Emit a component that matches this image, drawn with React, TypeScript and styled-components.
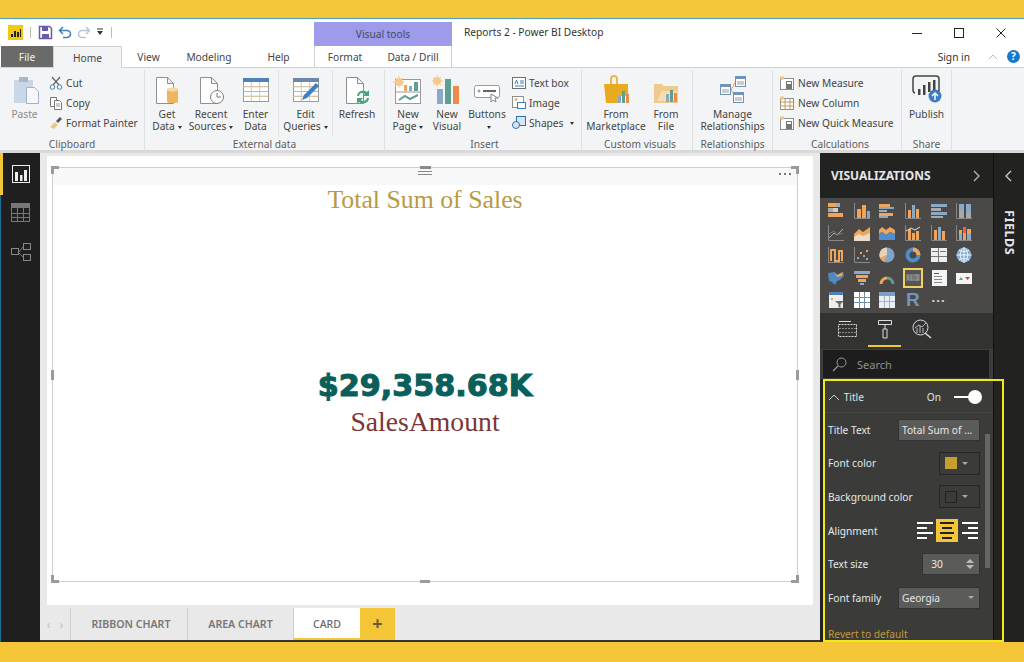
import React from "react";
import styled, { createGlobalStyle } from "styled-components";

const UI = `"Noto Sans", "Open Sans", "Liberation Sans", sans-serif`;
const SERIF = `"Liberation Serif", "DejaVu Serif", serif`;
const YELLOW = "#f4c536";
const OR = "#f0a55a";
const BL = "#8aa8c8";
const GR = "#5f9f8f";
const GY = "#a9a9a9";

const Global = createGlobalStyle`
  html, body { margin: 0; padding: 0; background: ${YELLOW}; }
  * { box-sizing: border-box; }
`;

const Page = styled.div`
  width: 1024px;
  height: 662px;
  display: flex;
  flex-direction: column;
  overflow: hidden;
  background: ${YELLOW};
  font-family: ${UI};
  font-size: 10.2px;
  color: #444;
`;
const Band = styled.div<{ $h: number }>`
  height: ${(p) => p.$h}px;
  flex: none;
  background: ${YELLOW};
`;
const Win = styled.div`
  flex: 1;
  min-height: 0;
  display: flex;
  flex-direction: column;
  background: #fff;
  border-top: 1px solid #4fa3bd;
`;

/* title bar */
const TitleBar = styled.div`
  height: 27px;
  flex: none;
  display: flex;
  background: #fff;
`;
const Quick = styled.div`
  width: 314px;
  display: flex;
  align-items: center;
  gap: 5px;
  padding: 0 0 0 8px;
  height: 26px;
`;
const QuickSep = styled.span`
  width: 1px;
  height: 11px;
  background: #bbb;
  margin: 0 2px;
`;
const ContextHead = styled.div`
  width: 138px;
  margin-top: 3px;
  background: #9d9bea;
  color: #3e4a63;
  text-align: center;
  line-height: 25px;
`;
const DocTitle = styled.div`
  flex: 1;
  padding: 6px 0 0 12px;
  color: #333;
`;
const WinButtons = styled.div`
  display: flex;
  padding: 2px 2px 0 0;
`;
const WinBtn = styled.div`
  width: 42px;
  height: 24px;
  display: flex;
  align-items: center;
  justify-content: center;
`;

/* tab row */
const TabRow = styled.div`
  height: 22px;
  flex: none;
  display: flex;
  align-items: stretch;
  background: #fff;
  border-bottom: 1px solid #d2d2d2;
`;
const FileTab = styled.div`
  width: 52px;
  margin-left: 1px;
  background: #6a6a6a;
  color: #f4f4f4;
  text-align: center;
  line-height: 23px;
`;
const RibbonTab = styled.div<{ $w: number; $active?: boolean }>`
  width: ${(p) => p.$w}px;
  text-align: center;
  line-height: 23px;
  background: ${(p) => (p.$active ? "#f3f4f5" : "#fff")};
  border-left: ${(p) => (p.$active ? "1px solid #d2d2d2" : "none")};
  border-right: ${(p) => (p.$active ? "1px solid #d2d2d2" : "none")};
  border-top: ${(p) => (p.$active ? "1px solid #d2d2d2" : "none")};
  margin-bottom: ${(p) => (p.$active ? "-1px" : "0")};
  color: #444;
`;
const ContextTabs = styled.div`
  width: 138px;
  display: flex;
  border-right: 1px solid #d2d2d2;
  border-left: 1px solid #d2d2d2;
`;
const SignIn = styled.div`
  margin-left: auto;
  display: flex;
  align-items: center;
  gap: 9px;
  padding-right: 4px;
  color: #333;
`;
const SignInText = styled.span`
  margin-right: 9px;
`;
const HelpDot = styled.div`
  width: 13px;
  height: 13px;
  border-radius: 50%;
  background: #1579cc;
  color: #fff;
  font-size: 10px;
  font-weight: 700;
  line-height: 13px;
  text-align: center;
`;

/* ribbon */
const Ribbon = styled.div`
  height: 85px;
  flex: none;
  display: flex;
  background: #f3f4f5;
  border-bottom: 3px solid #d9d9d9;
`;
const Group = styled.div<{ $w: number; $pad?: number }>`
  width: ${(p) => p.$w}px;
  flex: none;
  display: flex;
  flex-direction: column;
  border-right: 1px solid #dedfe0;
  margin: 2px 0 0;
  padding-left: ${(p) => p.$pad ?? 0}px;
`;
const GroupBody = styled.div`
  height: 67px;
  flex: none;
  display: flex;
`;
const GroupLabel = styled.div`
  text-align: center;
  color: #5c5c5c;
  line-height: 14px;
  height: 13px;
`;
const Large = styled.div<{ $w: number; $muted?: boolean; $line?: boolean }>`
  width: ${(p) => p.$w}px;
  flex: none;
  display: flex;
  flex-direction: column;
  align-items: center;
  text-align: center;
  line-height: 12px;
  padding-top: 4px;
  color: ${(p) => (p.$muted ? "#8b8b8b" : "#444")};
  border-right: ${(p) => (p.$line ? "1px solid #e2e3e4" : "none")};
  white-space: nowrap;
`;
const LargeIcon = styled.div`
  height: 32px;
  margin-bottom: 2px;
  display: flex;
  align-items: center;
  justify-content: center;
`;
const Caret = styled.span`
  display: inline-block;
  margin-left: 3px;
  width: 0;
  height: 0;
  border-left: 2.5px solid transparent;
  border-right: 2.5px solid transparent;
  border-top: 3px solid #333;
  vertical-align: middle;
`;
const SmallCol = styled.div<{ $ml?: number }>`
  display: flex;
  flex-direction: column;
  padding-top: 6px;
  margin-left: ${(p) => p.$ml ?? 0}px;
  gap: 6px;
`;
const Small = styled.div`
  height: 14px;
  display: flex;
  align-items: center;
  gap: 3px;
  white-space: nowrap;
  line-height: 14px;
`;

/* main */
const Main = styled.div`
  flex: 1;
  min-height: 0;
  display: flex;
`;
const Nav = styled.div`
  width: 40px;
  flex: none;
  background: #1f1f1f;
  border-left: 1px solid #1d6f94;
  display: flex;
  flex-direction: column;
  align-items: center;
  padding-top: 12px;
  gap: 20px;
  position: relative;
`;
const NavMark = styled.div`
  position: absolute;
  left: -1px;
  top: 0;
  width: 3px;
  height: 42px;
  background: ${YELLOW};
`;
const Center = styled.div`
  width: 780px;
  flex: none;
  display: flex;
  flex-direction: column;
  background: #e9e9e9;
`;
const CanvasWrap = styled.div`
  flex: 1;
  min-height: 0;
  padding: 3px 7px 3px 7px;
`;
const Canvas = styled.div`
  height: 100%;
  background: #fff;
  padding: 11px 15px 23px 5px;
`;
const Visual = styled.div`
  position: relative;
  height: 100%;
  border: 1px solid #cfcfcf;
  display: flex;
  flex-direction: column;
  align-items: center;
`;
const VisualHead = styled.div`
  align-self: stretch;
  height: 17px;
  flex: none;
  background: #f7f8fa;
`;
const ChartTitle = styled.div`
  font-family: ${SERIF};
  font-size: 25.8px;
  line-height: 30px;
  color: #b89a45;
`;
const CardBody = styled.div`
  flex: 1;
  display: flex;
  flex-direction: column;
  align-items: center;
  padding-top: 151px;
`;
const CardValue = styled.div`
  font-family: "DejaVu Sans", "Liberation Sans", sans-serif;
  font-weight: 700;
  font-size: 30.2px;
  line-height: 40px;
  color: #0b5f5b;
  -webkit-text-stroke: 1.1px #0b5f5b;
`;
const CardLabel = styled.div`
  font-family: ${SERIF};
  font-size: 27.7px;
  line-height: 32px;
  color: #7d3535;
`;
const Corner = styled.div<{ $x: "left" | "right"; $y: "top" | "bottom" }>`
  position: absolute;
  width: 8px;
  height: 8px;
  ${(p) => p.$x}: -2px;
  ${(p) => p.$y}: -2px;
  border-${(p) => p.$x}: 3px solid #9b9b9b;
  border-${(p) => p.$y}: 3px solid #9b9b9b;
`;
const Handle = styled.div<{ $side: "left" | "right" | "bottom" }>`
  position: absolute;
  background: #9b9b9b;
  ${(p) =>
    p.$side === "bottom"
      ? "bottom: -2px; left: 50%; margin-left: -5px; width: 10px; height: 3px;"
      : `${p.$side}: -2px; top: 50%; margin-top: -5px; width: 3px; height: 10px;`}
`;
const Grip = styled.div`
  position: absolute;
  top: -2px;
  left: 50%;
  margin-left: -7px;
  width: 14px;
  display: flex;
  flex-direction: column;
  align-items: center;
  gap: 2px;
  & > i {
    display: block;
    height: 1px;
    width: 14px;
    background: #8a8a8a;
  }
  & > i:first-child {
    height: 3px;
    width: 11px;
  }
`;
const More = styled.div`
  position: absolute;
  top: 5px;
  right: 6px;
  display: flex;
  gap: 3px;
  & > i {
    width: 2px;
    height: 2px;
    background: #777;
  }
`;

/* page tabs */
const PageTabs = styled.div`
  height: 34px;
  flex: none;
  display: flex;
  background: #e9e9e9;
  border-bottom: 2px solid #333;
`;
const TabArrows = styled.div`
  width: 31px;
  display: flex;
  align-items: center;
  justify-content: center;
  gap: 9px;
  color: #bfbfbf;
  font-size: 12px;
  border-right: 1px solid #cfcfcf;
`;
const PageTab = styled.div<{ $w: number; $active?: boolean; $shift?: number }>`
  width: ${(p) => p.$w}px;
  text-align: center;
  line-height: 32px;
  padding-left: ${(p) => p.$shift ?? 0}px;
  font-size: 10.6px;
  font-weight: ${(p) => (p.$active ? 500 : 600)};
  color: ${(p) => (p.$active ? "#6a6a6a" : "#777")};
  background: ${(p) => (p.$active ? "#fff" : "transparent")};
  border-right: ${(p) => (p.$active ? "none" : "1px solid #cfcfcf")};
  border-bottom: ${(p) => (p.$active ? `2px solid ${YELLOW}` : "none")};
`;
const AddTab = styled.div`
  width: 35px;
  background: ${YELLOW};
  color: #6a5a30;
  font-size: 18px;
  font-weight: 700;
  line-height: 30px;
  text-align: center;
`;

/* visualizations */
const VizPane = styled.div`
  width: 173px;
  flex: none;
  background: #222221;
  display: flex;
  flex-direction: column;
`;
const VizHead = styled.div`
  height: 45px;
  flex: none;
  display: flex;
  align-items: center;
  justify-content: space-between;
  padding: 0 11px 0 11px;
  color: #e4e7ea;
  font-size: 12px;
  font-weight: 700;
`;
const VizGrid = styled.div`
  height: 115px;
  flex: none;
  background: #4a4947;
  padding: 2px 0 0 3px;
  display: grid;
  grid-template-columns: repeat(6, 25.7px);
  grid-auto-rows: 22.2px;
  justify-items: center;
  align-items: center;
`;
const VizCell = styled.div<{ $on?: boolean }>`
  width: 20px;
  height: 20px;
  display: flex;
  align-items: center;
  justify-content: center;
  border: 2px solid ${(p) => (p.$on ? "#f0d264" : "transparent")};
`;
const RGlyph = styled.span`
  color: #6f97bd;
  font-family: "Liberation Sans", sans-serif;
  font-size: 19px;
  font-weight: 700;
  line-height: 20px;
`;
const DotsGlyph = styled.span`
  color: #ddd;
  font-size: 13px;
  font-weight: 700;
  letter-spacing: 1px;
  line-height: 10px;
  padding-bottom: 6px;
`;
const PaneTabs = styled.div`
  height: 36px;
  flex: none;
  background: #333332;
  display: flex;
  padding-left: 11px;
`;
const PaneTab = styled.div<{ $on?: boolean }>`
  width: 33px;
  height: 34px;
  margin-right: 4px;
  display: flex;
  align-items: center;
  justify-content: center;
  border-bottom: 2px solid ${(p) => (p.$on ? YELLOW : "transparent")};
`;
const SearchWrap = styled.div`
  height: 30px;
  flex: none;
  background: #3d3d3c;
  padding: 1px 4px 0 3px;
`;
const SearchBox = styled.div`
  height: 28px;
  background: #1d1d1d;
  display: flex;
  align-items: center;
  gap: 10px;
  padding-left: 9px;
  color: #8f8f8f;
  font-size: 11px;
`;
const Format = styled.div`
  flex: 1;
  min-height: 0;
  margin-left: 3px;
  background: #3b3b3a;
  position: relative;
  overflow: hidden;
`;
const FormatHead = styled.div`
  height: 34px;
  display: flex;
  align-items: center;
  padding: 3px 11px 0 5px;
  color: #dde3e6;
  border-bottom: 1px solid #454544;
`;
const ToggleLabel = styled.span`
  margin-left: auto;
  margin-right: 13px;
`;
const Toggle = styled.div`
  width: 28px;
  height: 14px;
  position: relative;
  &::before {
    content: "";
    position: absolute;
    left: 0;
    top: 6px;
    width: 20px;
    height: 2px;
    background: #fff;
  }
  &::after {
    content: "";
    position: absolute;
    right: 0;
    top: 0;
    width: 14px;
    height: 14px;
    border-radius: 50%;
    background: #fff;
  }
`;
const Row = styled.div`
  height: 33.6px;
  display: flex;
  align-items: center;
  justify-content: space-between;
  padding: 0 13px 0 5px;
  color: #e6e9ea;
  white-space: nowrap;
`;
const Field = styled.div<{ $w: number }>`
  width: ${(p) => p.$w}px;
  height: 22px;
  background: #5b5b5a;
  border: 1px solid #333;
  color: #e8e8e8;
  display: flex;
  align-items: center;
  justify-content: space-between;
  padding: 0 5px 0 3px;
`;
const Swatch = styled.div`
  width: 41px;
  height: 23px;
  border: 1px solid #262626;
  display: flex;
  align-items: center;
  gap: 5px;
  padding-left: 5px;
`;
const SwatchFill = styled.div<{ $c: string; $line?: boolean }>`
  width: 12px;
  height: 12px;
  background: ${(p) => p.$c};
  border: ${(p) => (p.$line ? "1px solid #222" : "none")};
`;
const TinyCaret = styled.span`
  width: 0;
  height: 0;
  border-left: 3px solid transparent;
  border-right: 3px solid transparent;
  border-top: 3px solid #aaa;
`;
const AlignGroup = styled.div`
  display: flex;
  align-items: center;
  gap: 3px;
  margin-right: 2px;
`;
const AlignBtn = styled.div<{ $on?: boolean }>`
  width: ${(p) => (p.$on ? 22 : 16)}px;
  height: 23px;
  margin-right: ${(p) => (p.$on ? 1 : 0)}px;
  background: ${(p) => (p.$on ? YELLOW : "transparent")};
  display: flex;
  flex-direction: column;
  justify-content: center;
  gap: 3px;
  padding: 0 ${(p) => (p.$on ? 4 : 0)}px;
`;
const AlignLine = styled.i<{ $on?: boolean; $w: number; $end?: boolean }>`
  display: block;
  height: 2px;
  width: ${(p) => p.$w}px;
  background: ${(p) => (p.$on ? "#222" : "#fff")};
  align-self: ${(p) => (p.$end ? "flex-end" : p.$on ? "center" : "flex-start")};
`;
const Spin = styled.div`
  display: flex;
  flex-direction: column;
  gap: 2px;
  & > i {
    width: 0;
    height: 0;
    border-left: 4px solid transparent;
    border-right: 4px solid transparent;
  }
  & > i:first-child {
    border-bottom: 4px solid #bbb;
  }
  & > i:last-child {
    border-top: 4px solid #bbb;
  }
`;
const Revert = styled.div`
  padding: 12px 0 0 5px;
  color: #c09a3a;
`;
const ScrollThumb = styled.div`
  position: absolute;
  top: 55px;
  right: 3px;
  width: 5px;
  height: 134px;
  background: #666;
`;
const Highlight = styled.div`
  position: absolute;
  left: 823px;
  top: 379px;
  width: 181px;
  height: 263px;
  border: 2px solid #f2ea12;
  pointer-events: none;
`;
const FieldsPane = styled.div`
  width: 31px;
  flex: none;
  background: #222221;
  border-left: 1px solid #111;
  display: flex;
  flex-direction: column;
  align-items: center;
  padding-top: 17px;
`;
const FieldsLabel = styled.div`
  writing-mode: vertical-rl;
  margin-top: 28px;
  color: #e4e7ea;
  font-size: 12.5px;
  font-weight: 700;
  line-height: 14px;
  letter-spacing: 0.6px;
`;

/* ---- ribbon icons ---- */
const Svg = ({ s = 28, h, children }: { s?: number; h?: number; children: React.ReactNode }) => (
  <svg width={s} height={h ?? s} viewBox={`0 0 ${s} ${h ?? s}`} style={{ display: "block" }}>
    {children}
  </svg>
);
const Doc = () => (
  <path d="M4.500 2.500h11l6 6v20h-17z M15.500 2.500v6h6" fill="#fff" stroke="#8f8f8f" />
);
const TableGrid = ({ x, y, w, h, head = "#4f81bd" }: { x: number; y: number; w: number; h: number; head?: string }) => (
  <g>
    <rect x={x + 0.5} y={y + 0.5} width={w} height={h} fill="#fff" stroke="#9a9a9a" />
    <rect x={x} y={y} width={w + 1} height={4} fill={head} />
    {[1, 2, 3].map((i) => (
      <path key={i} d={`M${x} ${y + 4 + (i * (h - 4)) / 4}h${w}`} stroke="#c9b48c" />
    ))}
    {[1, 2].map((i) => (
      <path key={i} d={`M${x + (i * w) / 3} ${y + 4}v${h - 4}`} stroke="#c9c9c9" />
    ))}
  </g>
);

const PasteIcon = () => (
  <Svg s={30}>
    <rect x="4" y="5" width="19" height="23" fill="#c9d7e6" />
    <rect x="9" y="2" width="9" height="5" fill="#a9b8c8" />
    <path d="M16.500 12.500h8l4 4v12h-12z" fill="#f6f8fb" stroke="#9fb4cc" />
  </Svg>
);
const CutIcon = () => (
  <Svg s={14}>
    <path d="M3 1l7 8M11 1L4 9" stroke="#666" strokeWidth="1.200" fill="none" />
    <circle cx="3.500" cy="11" r="2.300" fill="none" stroke="#4f81bd" />
    <circle cx="10.500" cy="11" r="2.300" fill="none" stroke="#4f81bd" />
  </Svg>
);
const CopyIcon = () => (
  <Svg s={14}>
    <path d="M1.500 1.500h6v9h-6z" fill="#fff" stroke="#777" />
    <path d="M5.500 4.500h5l2 2v7h-7z" fill="#fff" stroke="#777" />
    <path d="M7 8h4M7 10h4" stroke="#999" />
  </Svg>
);
const PainterIcon = () => (
  <Svg s={14}>
    <path d="M1 11l5-5 3 3-4 4z" fill="#e8c98a" />
    <path d="M7 5l4-4 2 2-4 4z" fill="#555" />
  </Svg>
);
const GetDataIcon = () => (
  <Svg s={30}>
    <Doc />
    <rect x="15" y="14" width="11" height="14" rx="2" fill="#f0b45e" />
    <ellipse cx="20.500" cy="14.500" rx="5.500" ry="2" fill="#f8d8a0" />
  </Svg>
);
const RecentIcon = () => (
  <Svg s={30}>
    <Doc />
    <circle cx="21" cy="22" r="6.500" fill="#fff" stroke="#7a7a7a" />
    <path d="M21 18v4h4" fill="none" stroke="#7a7a7a" />
  </Svg>
);
const EnterIcon = () => (
  <Svg s={30}>
    <TableGrid x={2} y={3} w={25} h={23} />
  </Svg>
);
const EditIcon = () => (
  <Svg s={30}>
    <TableGrid x={2} y={3} w={25} h={23} head="#6d87a8" />
    <path d="M11 25l2-5L25 8l3 3-12 12z" fill="#3f7fc4" />
  </Svg>
);
const RefreshIcon = () => (
  <Svg s={30}>
    <Doc />
    <path d="M15 21a6 6 0 0 1 10-4l2-2v6h-6l2-2a3.500 3.500 0 0 0-6 2zM27 23a6 6 0 0 1-10 4l-2 2v-6h6l-2 2a3.500 3.500 0 0 0 6-2z" fill="#4aa37a" />
  </Svg>
);
const Sun = ({ x, y }: { x: number; y: number }) => (
  <g>
    <circle cx={x} cy={y} r="4" fill="#f5c98e" />
    <path d={`M${x - 6} ${y}h12M${x} ${y - 6}v12M${x - 4} ${y - 4}l8 8M${x + 4} ${y - 4}l-8 8`} stroke="#f5c98e" />
  </g>
);
const NewPageIcon = () => (
  <Svg s={30}>
    <rect x="2.500" y="4.500" width="25" height="24" fill="#fff" stroke="#999" />
    <path d="M2 17h26" stroke="#999" />
    <rect x="11" y="10" width="3" height="6" fill={OR} />
    <rect x="16" y="11" width="3" height="5" fill={BL} />
    <rect x="21" y="7" width="4" height="9" fill={GR} />
    <path d="M6 25l6-4 5 3 8-4" fill="none" stroke={GR} strokeWidth="2" />
    <Sun x={6} y={7} />
  </Svg>
);
const NewVisualIcon = () => (
  <Svg s={30}>
    <rect x="5" y="14" width="6" height="15" fill={BL} />
    <rect x="13" y="4" width="6" height="25" fill={GR} />
    <rect x="21" y="11" width="6" height="18" fill="#ed8a4a" />
    <Sun x={5} y={6} />
  </Svg>
);
const ButtonsIcon = () => (
  <Svg s={30}>
    <rect x="2.500" y="10.500" width="25" height="12" rx="2" fill="#fff" stroke="#999" />
    <circle cx="7" cy="16" r="1.500" fill="#7fa6cc" />
    <rect x="11" y="15" width="13" height="2" fill="#666" />
    <path d="M19 19v8l2-2 3 2-1-4h3z" fill="#fff" stroke="#888" />
  </Svg>
);
const TextBoxIcon = () => (
  <Svg s={14}>
    <rect x="0.500" y="1.500" width="13" height="11" fill="#fff" stroke="#6f6f6f" />
    <path d="M3 8l1.500-4L6 8M8 5h4M8 7h4M3 10h9" stroke="#3f7fc4" fill="none" />
  </Svg>
);
const ImageIcon = () => (
  <Svg s={14}>
    <rect x="0.500" y="0.500" width="11" height="11" fill="#fff" stroke="#8f8f8f" />
    <circle cx="4" cy="3.500" r="1.500" fill="#f0b45e" />
    <rect x="5.500" y="6.500" width="8" height="6" fill="#fff" stroke="#3f7fc4" />
  </Svg>
);
const ShapesIcon = () => (
  <Svg s={14}>
    <rect x="4.500" y="0.500" width="9" height="9" fill="#d7e6f5" stroke="#2f6fb0" />
    <circle cx="4" cy="9" r="3.500" fill="#d7e6f5" stroke="#2f6fb0" />
  </Svg>
);
const MarketIcon = () => (
  <Svg s={30}>
    <path d="M3 9h24v12h-8v7H5z" fill="#e8aa1e" />
    <path d="M10 9V4a3 3 0 0 1 6 0v5" fill="none" stroke="#eab84a" strokeWidth="2" />
    <rect x="17" y="21" width="3" height="7" fill={BL} />
    <rect x="21" y="16" width="3" height="12" fill={GR} />
    <rect x="25" y="19" width="3" height="9" fill="#ed8a4a" />
  </Svg>
);
const FromFileIcon = () => (
  <Svg s={30}>
    <path d="M3 9h8l2 2h14v17H3z" fill="#f0c98c" />
    <path d="M6 26l5-10h17l-4 10z" fill="#f7dcb0" />
    <rect x="15" y="19" width="3" height="8" fill={BL} />
    <rect x="19" y="15" width="3" height="12" fill={GR} />
    <rect x="23" y="18" width="3" height="9" fill="#ed8a4a" />
  </Svg>
);
const MiniTable = ({ x, y }: { x: number; y: number }) => (
  <g>
    <rect x={x + 0.5} y={y + 0.5} width="10" height="10" fill="#fff" stroke="#6f8fae" />
    <rect x={x} y={y} width="11" height="3" fill="#6f94bb" />
    <path d={`M${x + 2} ${y + 6}h7M${x + 2} ${y + 8}h7`} stroke="#999" />
  </g>
);
const ManageIcon = () => (
  <Svg s={30}>
    <path d="M13 15l5-9M13 15l5 6" stroke="#e89a4a" fill="none" />
    <MiniTable x={2} y={9} />
    <MiniTable x={17} y={1} />
    <MiniTable x={15} y={17} />
  </Svg>
);
const CalcIcon = ({ grid }: { grid?: boolean }) => (
  <Svg s={16}>
    <rect x="1.500" y="3.500" width="13" height="11" fill="#fff" stroke="#8f8f8f" />
    {grid ? (
      <path d="M1 7h14M1 11h14M6 4v11M11 4v11" stroke="#c09a5a" />
    ) : (
      <g>
        <rect x="7" y="6" width="6" height="8" fill="#777" />
        <rect x="8" y="7" width="4" height="2" fill="#fff" />
      </g>
    )}
    <circle cx="3" cy="3" r="2" fill="#f0c98c" />
  </Svg>
);
const PublishIcon = () => (
  <Svg s={32}>
    <path d="M4 19a3 3 0 0 1-2-3V5a3 3 0 0 1 3-3h20a3 3 0 0 1 3 3v11a3 3 0 0 1-2 3" fill="none" stroke="#444" strokeWidth="1.500" />
    <rect x="7" y="15" width="2.500" height="6" fill="#444" />
    <rect x="12" y="11" width="2.500" height="10" fill="#444" />
    <rect x="17" y="8" width="2.500" height="10" fill="#444" />
    <rect x="22" y="6" width="2.500" height="10" fill="#444" />
    <circle cx="24" cy="22" r="6.500" fill="#3c7fc0" />
    <path d="M24 26v-7M21 22l3-3 3 3" stroke="#fff" strokeWidth="1.500" fill="none" />
  </Svg>
);

/* ---- viz gallery icons, 16 x 16 ---- */
const r = (x: number, y: number, w: number, h: number, c: string) => (
  <rect key={`${x}-${y}-${w}`} x={x} y={y} width={w} height={h} fill={c} />
);
const axis = <path d="M.5 0v15.500H16" stroke="#888" fill="none" />;
const vizIcons: React.ReactNode[] = [
  [r(0, 0, 8, 4, OR), r(8, 0, 4, 4, GY), r(0, 5, 5, 4, GY), r(5, 5, 5, 4, "#cfcfcf"), r(0, 10, 10, 4, OR), r(10, 10, 5, 4, OR)],
  [axis, r(3, 6, 4, 9, OR), r(8, 2, 4, 13, OR), r(13, 8, 3, 7, BL)],
  [r(0, 1, 11, 3, OR), r(0, 4, 15, 2, BL), r(0, 7, 8, 2, GY), r(0, 10, 14, 3, OR), r(0, 13, 9, 2, BL)],
  [axis, r(3, 7, 3, 8, OR), r(7, 2, 3, 13, BL), r(11, 6, 3, 9, OR)],
  [r(0, 1, 16, 3, BL), r(0, 5, 10, 3, GY), r(0, 9, 16, 3, BL), r(0, 13, 12, 2, GY)],
  [axis, r(3, 1, 5, 6, BL), r(3, 7, 5, 8, GY), r(10, 1, 5, 9, BL), r(10, 10, 5, 5, GY)],

  [axis, <path key="l" d="M1 13l5-5 3 2 6-6" stroke="#aaa" fill="none" />, <path key="m" d="M1 9l5-3 3 4 6-2" stroke="#777" fill="none" />],
  [<path key="a" d="M0 9l5-5 4 3 7-5v14H0z" fill={OR} />, <path key="b" d="M0 12l5-3 4 2 7-3v8H0z" fill="#eedcc8" />],
  [<path key="a" d="M0 5l3-3 4 3 4-3 5 3v4l-5-2-4 3-4-3-3 2z" fill={OR} />, <path key="b" d="M0 9l3-2 4 3 4-3 5 2v6H0z" fill="#4f8fd0" />],
  [axis, r(3, 4, 3, 11, OR), r(7, 8, 3, 7, OR), r(11, 6, 3, 9, OR), <path key="l" d="M1 6l5-3 4 2 5-3" stroke="#ddd" fill="none" />],
  [axis, r(3, 5, 3, 10, OR), r(7, 2, 3, 13, BL), r(11, 6, 3, 9, OR)],
  [axis, r(3, 5, 3, 4, OR), r(3, 9, 3, 6, BL), r(7, 2, 3, 6, "#e8663a"), r(7, 8, 3, 7, OR), r(11, 4, 4, 5, OR), r(11, 9, 4, 6, BL)],

  [axis, <path key="a" d="M3 14V3h4v11h4V4h3v10" stroke={OR} strokeWidth="2" fill="none" />],
  [axis, r(3, 10, 2, 2, BL), r(6, 5, 2, 2, OR), r(9, 8, 2, 2, BL), r(12, 3, 2, 2, OR), r(12, 11, 2, 2, GY)],
  [<circle key="c" cx="8" cy="8" r="7.500" fill="#7ea4cb" />, <path key="p" d="M8 8V.5A7.500 7.500 0 0 0 1 11z" fill="#e8d2b4" />, <path key="q" d="M8 8L1 11a7.500 7.500 0 0 0 4 4z" fill={OR} />],
  [<circle key="c" cx="8" cy="8" r="5.500" fill="none" stroke="#4f8fc8" strokeWidth="4" />, <path key="d" d="M8 2.500A5.500 5.500 0 0 1 13.500 8" fill="none" stroke={OR} strokeWidth="4" />],
  [r(0, 1, 16, 14, "#eee"), r(1, 4, 6, 1, "#777"), r(9, 4, 6, 1, "#777"), r(7, 1, 1, 14, "#777"), r(0, 9, 16, 1, "#777")],
  [<circle key="c" cx="8" cy="8" r="7.500" fill="#86aed6" />, <path key="g" d="M.5 8h15M8 .5v15M3 3c3 2 7 2 10 0M3 13c3-2 7-2 10 0M8 .5c-5 4-5 11 0 15M8 .5c5 4 5 11 0 15" stroke="#eef4fa" fill="none" />],

  [<path key="a" d="M0 3l7-1 2 3 6-3 1 4-4 4-3 1-2 4-3-3-3-1z" fill="#4f86c6" />, <path key="b" d="M6 2l3 3 6-3-1 4-5 1z" fill={OR} />],
  [r(0, 1, 16, 3, BL), r(2, 5, 12, 3, OR), r(4, 9, 8, 3, OR), r(6, 13, 4, 2, BL)],
  [<path key="a" d="M2 14a6 6 0 0 1 6-6" stroke={OR} strokeWidth="3" fill="none" />, <path key="b" d="M8 8a6 6 0 0 1 6 6" stroke={GR} strokeWidth="3" fill="none" />],
  [r(0, 0, 16, 16, "#555"), r(1, 4, 14, 7, "#777"), <path key="d" d="M3 5v5M6 5v5h2M10 5h3v5h-3" stroke="#999" fill="none" />],
  [r(1, 0, 15, 16, "#f4f4f4"), r(3, 3, 5, 1, "#555"), r(3, 6, 8, 1, "#888"), r(3, 9, 8, 1, "#888"), r(3, 12, 8, 1, "#888")],
  [r(0, 3, 16, 11, "#f4f4f4"), <path key="a" d="M3 10l2-3 2 3z" fill={GR} />, <path key="b" d="M9 7h5l-2.500 3z" fill="#c0504d" />],

  [r(1, 0, 14, 16, "#eee"), r(1, 0, 14, 3, "#4f81bd"), <path key="f" d="M7 9h9l-3.500 3v4l-2-1v-3z" fill="#666" />, r(3, 6, 2, 2, OR)],
  [r(0, 0, 16, 16, "#fff"), <path key="g" d="M0 5.500h16M0 10.500h16M5.500 0v16M10.500 0v16" stroke="#6f8fae" />],
  [r(0, 0, 16, 16, "#e8eef4"), r(0, 0, 16, 4, "#7da1c6"), <path key="g" d="M0 9.500h16M5.500 4v12M10.500 4v12" stroke="#9fb4cc" />],
];

const Large2 = ({ w, icon, l1, l2, caret, muted, line }: { w: number; icon: React.ReactNode; l1: string; l2?: string; caret?: boolean; muted?: boolean; line?: boolean }) => (
  <Large $w={w} $muted={muted} $line={line}>
    <LargeIcon>{icon}</LargeIcon>
    <span>{l1}</span>
    {l2 !== undefined && (
      <span>
        {l2}
        {caret && <Caret />}
      </span>
    )}
  </Large>
);

export default function App() {
  return (
    <Page>
      <Global />
      <Band $h={18} />
      <Win>
        <TitleBar>
          <Quick>
            <Svg s={15}>
              <rect width="15" height="15" fill="#f2c811" />
              <path d="M3 12V9h2v3zM6 12V6h2v6zM9 12V7h2v5zM12 12V4h1v8z" fill="#222" />
            </Svg>
            <QuickSep />
            <Svg s={15}>
              <path d="M1.500 1.500h10l2 2v10h-12z" fill="#fff" stroke="#6a5aa8" strokeWidth="1.500" />
              <rect x="4" y="2" width="6" height="4" fill="#6a5aa8" />
              <rect x="4" y="9" width="7" height="4" fill="#6a5aa8" />
            </Svg>
            <Svg s={14}>
              <path d="M5 2L1.500 5.500 5 9M2 5.500h7a3.500 3.500 0 0 1 0 7H5" fill="none" stroke="#3f7fb8" strokeWidth="1.500" />
            </Svg>
            <Svg s={14}>
              <path d="M9 2l3.500 3.500L9 9M12 5.500H5a3.500 3.500 0 0 0 0 7h4" fill="none" stroke="#b4c6d8" strokeWidth="1.500" />
            </Svg>
            <Svg s={8} h={8}>
              <path d="M1 1h6" stroke="#333" />
              <path d="M1 3h6L4 7z" fill="#333" />
            </Svg>
            <QuickSep />
          </Quick>
          <ContextHead>Visual tools</ContextHead>
          <DocTitle>Reports 2 - Power BI Desktop</DocTitle>
          <WinButtons>
            <WinBtn>
              <Svg s={10}><path d="M0 5.500h10" stroke="#222" /></Svg>
            </WinBtn>
            <WinBtn>
              <Svg s={10}><rect x=".5" y=".5" width="9" height="9" fill="none" stroke="#222" /></Svg>
            </WinBtn>
            <WinBtn>
              <Svg s={10}><path d="M.5.500l9 9M9.500.500l-9 9" stroke="#222" /></Svg>
            </WinBtn>
          </WinButtons>
        </TitleBar>

        <TabRow>
          <FileTab>File</FileTab>
          <RibbonTab $w={69} $active>Home</RibbonTab>
          <RibbonTab $w={53}>View</RibbonTab>
          <RibbonTab $w={68}>Modeling</RibbonTab>
          <RibbonTab $w={71}>Help</RibbonTab>
          <ContextTabs>
            <RibbonTab $w={60}>Format</RibbonTab>
            <RibbonTab $w={76}>Data / Drill</RibbonTab>
          </ContextTabs>
          <SignIn>
            <SignInText>Sign in</SignInText>
            <Svg s={10} h={7}><path d="M1 6l4-4 4 4" fill="none" stroke="#bbb" /></Svg>
            <HelpDot>?</HelpDot>
          </SignIn>
        </TabRow>

        <Ribbon>
          <Group $w={145}>
            <GroupBody>
              <Large2 w={49} icon={<PasteIcon />} l1="Paste" muted />
              <SmallCol>
                <Small><CutIcon /> Cut</Small>
                <Small><CopyIcon /> Copy</Small>
                <Small><PainterIcon /> Format Painter</Small>
              </SmallCol>
            </GroupBody>
            <GroupLabel>Clipboard</GroupLabel>
          </Group>
          <Group $w={240}>
            <GroupBody>
              <Large2 w={44} icon={<GetDataIcon />} l1="Get" l2="Data" caret />
              <Large2 w={44} icon={<RecentIcon />} l1="Recent" l2="Sources" caret />
              <Large2 w={46} line icon={<EnterIcon />} l1="Enter" l2="Data" />
              <Large2 w={54} line icon={<EditIcon />} l1="Edit" l2="Queries" caret />
              <Large2 w={48} icon={<RefreshIcon />} l1="Refresh" />
            </GroupBody>
            <GroupLabel>External data</GroupLabel>
          </Group>
          <Group $w={197} $pad={3}>
            <GroupBody>
              <Large2 w={40} icon={<NewPageIcon />} l1="New" l2="Page" caret />
              <Large2 w={38} icon={<NewVisualIcon />} l1="New" l2="Visual" />
              <Large2 w={42} icon={<ButtonsIcon />} l1="Buttons" l2="" caret />
              <SmallCol $ml={4}>
                <Small><TextBoxIcon /> Text box</Small>
                <Small><ImageIcon /> Image</Small>
                <Small><ShapesIcon /> Shapes<Caret /></Small>
              </SmallCol>
            </GroupBody>
            <GroupLabel>Insert</GroupLabel>
          </Group>
          <Group $w={111} $pad={6}>
            <GroupBody>
              <Large2 w={56} icon={<MarketIcon />} l1="From" l2="Marketplace" />
              <Large2 w={44} icon={<FromFileIcon />} l1="From" l2="File" />
            </GroupBody>
            <GroupLabel>Custom visuals</GroupLabel>
          </Group>
          <Group $w={80}>
            <GroupBody>
              <Large2 w={79} icon={<ManageIcon />} l1="Manage" l2="Relationships" />
            </GroupBody>
            <GroupLabel>Relationships</GroupLabel>
          </Group>
          <Group $w={129} $pad={6}>
            <GroupBody>
              <SmallCol>
                <Small><CalcIcon /> New Measure</Small>
                <Small><CalcIcon grid /> New Column</Small>
                <Small><CalcIcon /> New Quick Measure</Small>
              </SmallCol>
            </GroupBody>
            <GroupLabel>Calculations</GroupLabel>
          </Group>
          <Group $w={50}>
            <GroupBody>
              <Large2 w={49} icon={<PublishIcon />} l1="Publish" />
            </GroupBody>
            <GroupLabel>Share</GroupLabel>
          </Group>
        </Ribbon>

        <Main>
          <Nav>
            <NavMark />
            <Svg s={18}>
              <rect x=".5" y=".5" width="17" height="17" fill="none" stroke="#eee" />
              <rect x="3" y="7" width="3" height="9" fill="#eee" />
              <rect x="8" y="10" width="2.500" height="6" fill="#eee" />
              <rect x="12" y="5" width="3" height="11" fill="#eee" />
            </Svg>
            <Svg s={19}>
              <rect x=".5" y=".5" width="18" height="18" fill="none" stroke="#777" />
              <rect x="0" y="0" width="19" height="5" fill="#777" />
              <path d="M0 10.500h19M0 14.500h19M6.500 5v14M12.500 5v14" stroke="#777" />
            </Svg>
            <Svg s={20}>
              <path d="M8 10l4-5M8 11l4 4" stroke="#777" fill="none" />
              <rect x=".5" y="6.500" width="7" height="6" fill="none" stroke="#888" />
              <rect x="12.500" y="1.500" width="7" height="6" fill="none" stroke="#888" />
              <rect x="12.500" y="12.500" width="7" height="6" fill="none" stroke="#888" />
            </Svg>
          </Nav>

          <Center>
            <CanvasWrap>
              <Canvas>
                <Visual>
                  <VisualHead />
                  <ChartTitle>Total Sum of Sales</ChartTitle>
                  <CardBody>
                    <CardValue>$29,358.68K</CardValue>
                    <CardLabel>SalesAmount</CardLabel>
                  </CardBody>
                  <Corner $x="left" $y="top" />
                  <Corner $x="right" $y="top" />
                  <Corner $x="left" $y="bottom" />
                  <Corner $x="right" $y="bottom" />
                  <Handle $side="left" />
                  <Handle $side="right" />
                  <Handle $side="bottom" />
                  <Grip><i /><i /><i /></Grip>
                  <More><i /><i /><i /></More>
                </Visual>
              </Canvas>
            </CanvasWrap>
            <PageTabs>
              <TabArrows><span>‹</span><span>›</span></TabArrows>
              <PageTab $w={117} $shift={4}>RIBBON CHART</PageTab>
              <PageTab $w={106}>AREA CHART</PageTab>
              <PageTab $w={66} $active>CARD</PageTab>
              <AddTab>+</AddTab>
            </PageTabs>
          </Center>

          <VizPane>
            <VizHead>
              VISUALIZATIONS
              <Svg s={10} h={12}><path d="M2 1l5 5-5 5" fill="none" stroke="#bbb" strokeWidth="1.300" /></Svg>
            </VizHead>
            <VizGrid>
              {vizIcons.map((icon, i) => (
                <VizCell key={i} $on={i === 21}>
                  <svg width="16" height="16" viewBox="0 0 16 16" style={{ display: "block", flex: "none" }}>{icon}</svg>
                </VizCell>
              ))}
              <VizCell><RGlyph>R</RGlyph></VizCell>
              <VizCell><DotsGlyph>...</DotsGlyph></VizCell>
            </VizGrid>
            <PaneTabs>
              <PaneTab>
                <Svg s={20}>
                  <path d="M1 2.500h12" stroke="#ddd" />
                  <rect x=".5" y="5.500" width="18" height="12" fill="none" stroke="#ddd" strokeDasharray="2 1" />
                  <path d="M1 9.500h17M1 13.500h17" stroke="#888" strokeDasharray="2 1" />
                </Svg>
              </PaneTab>
              <PaneTab $on>
                <Svg s={20}>
                  <path d="M3.500 1.500h13v4h-13zM10 6v4M10 10h-2v9h4v-9z" fill="none" stroke="#ddd" />
                </Svg>
              </PaneTab>
              <PaneTab>
                <Svg s={20}>
                  <circle cx="8.500" cy="8.500" r="7.500" fill="none" stroke="#ddd" />
                  <path d="M13 14l6 5" stroke="#ddd" strokeWidth="1.500" />
                  <path d="M5 14V9M8 14V7M11 14V9M3 9l4-3 3 2 4-4" stroke="#bbb" fill="none" />
                </Svg>
              </PaneTab>
            </PaneTabs>
            <SearchWrap>
              <SearchBox>
                <Svg s={15}>
                  <circle cx="9.500" cy="5.500" r="4.500" fill="none" stroke="#999" />
                  <path d="M6 9l-5 5" stroke="#999" strokeWidth="1.300" />
                </Svg>
                Search
              </SearchBox>
            </SearchWrap>
            <Format>
              <FormatHead>
                <Svg s={13} h={8}><path d="M1 7l5-5 5 5" fill="none" stroke="#ccc" /></Svg>
                &nbsp;Title
                <ToggleLabel>On</ToggleLabel>
                <Toggle />
              </FormatHead>
              <Row>
                Title Text
                <Field $w={82}>Total Sum of ...</Field>
              </Row>
              <Row>
                Font color
                <Swatch><SwatchFill $c="#c4a02e" /><TinyCaret /></Swatch>
              </Row>
              <Row>
                Background color
                <Swatch><SwatchFill $c="#3b3b3a" $line /><TinyCaret /></Swatch>
              </Row>
              <Row>
                Alignment
                <AlignGroup>
                  <AlignBtn>
                    <AlignLine $w={16} /><AlignLine $w={10} /><AlignLine $w={16} /><AlignLine $w={10} />
                  </AlignBtn>
                  <AlignBtn $on>
                    <AlignLine $on $w={14} /><AlignLine $on $w={10} /><AlignLine $on $w={14} /><AlignLine $on $w={10} />
                  </AlignBtn>
                  <AlignBtn>
                    <AlignLine $end $w={16} /><AlignLine $end $w={10} /><AlignLine $end $w={16} /><AlignLine $end $w={10} />
                  </AlignBtn>
                </AlignGroup>
              </Row>
              <Row>
                Text size
                <Field $w={58}>
                  &nbsp;&nbsp;30
                  <Spin><i /><i /></Spin>
                </Field>
              </Row>
              <Row>
                Font family
                <Field $w={82}>
                  Georgia
                  <TinyCaret />
                </Field>
              </Row>
              <Revert>Revert to default</Revert>
              <ScrollThumb />
            </Format>
          </VizPane>

          <FieldsPane>
            <Svg s={10} h={12}><path d="M7 1L2 6l5 5" fill="none" stroke="#ccc" strokeWidth="1.300" /></Svg>
            <FieldsLabel>FIELDS</FieldsLabel>
          </FieldsPane>
        </Main>
      </Win>
      <Band $h={20} />
      <Highlight />
    </Page>
  );
}
